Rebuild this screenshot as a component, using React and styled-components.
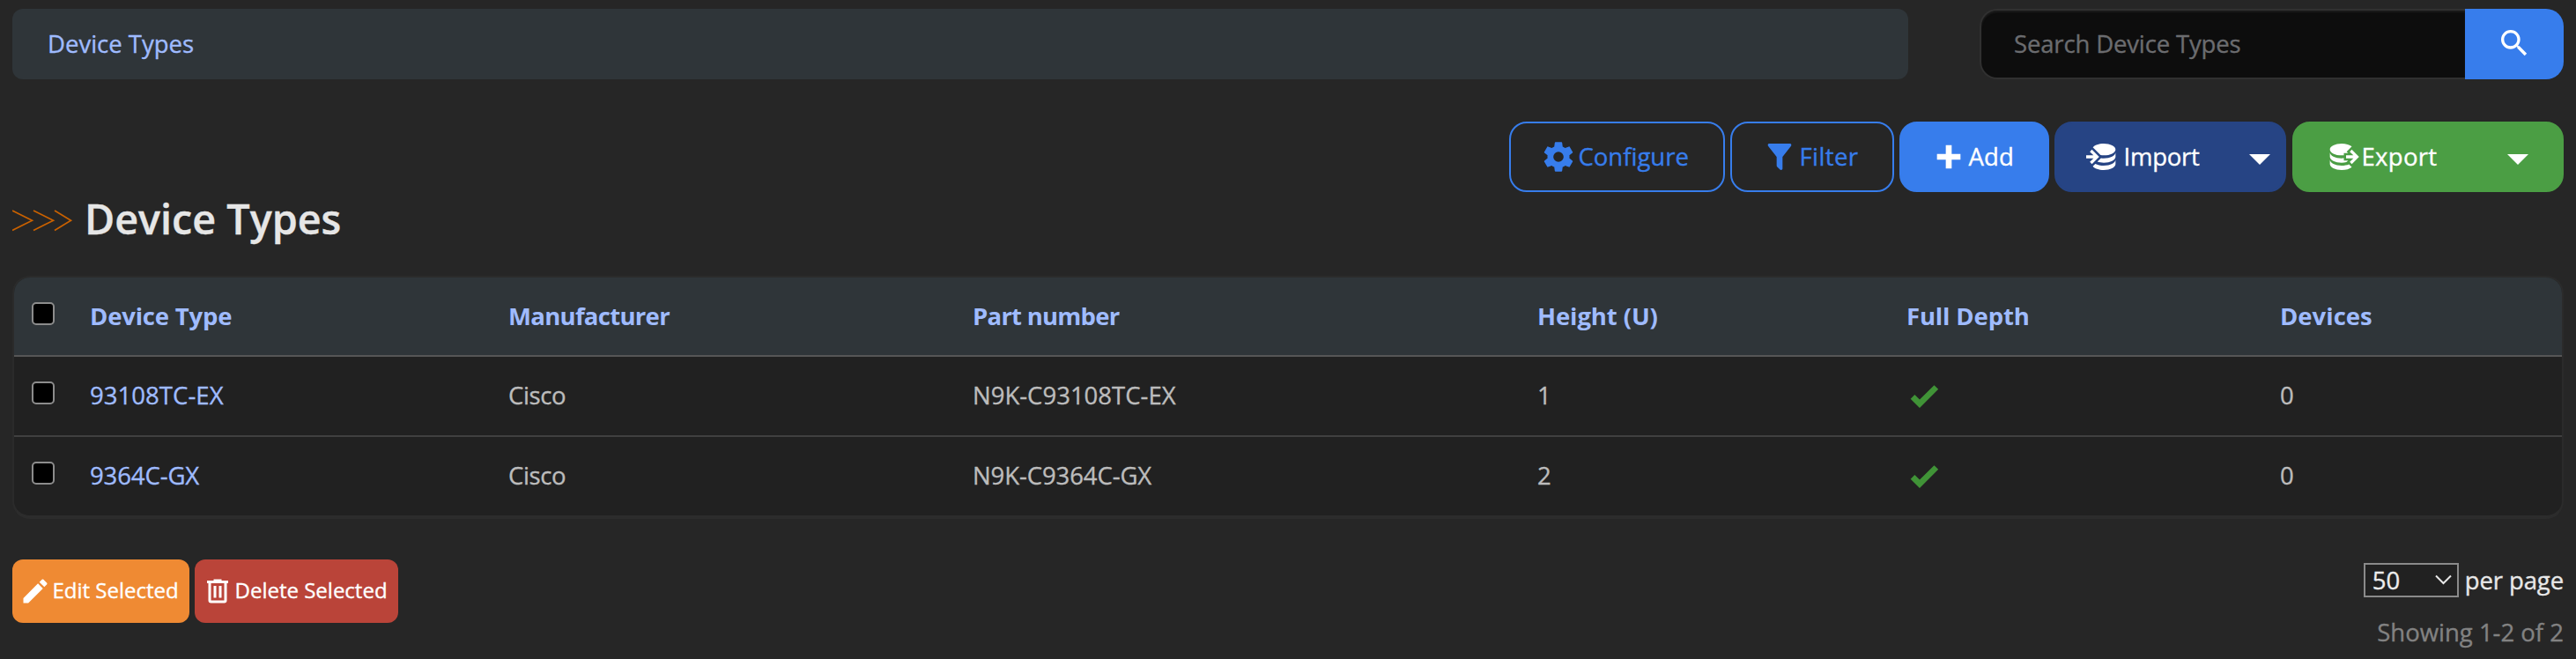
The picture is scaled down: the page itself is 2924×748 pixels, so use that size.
import React from 'react';
import styled, { createGlobalStyle } from 'styled-components';

const ICONS = {
  cog: 'M12,15.5A3.5,3.5 0 0,1 8.5,12A3.5,3.5 0 0,1 12,8.5A3.5,3.5 0 0,1 15.5,12A3.5,3.5 0 0,1 12,15.5M19.43,12.97C19.47,12.65 19.5,12.33 19.5,12C19.5,11.67 19.47,11.34 19.43,11L21.54,9.37C21.73,9.22 21.78,8.95 21.66,8.73L19.66,5.27C19.54,5.05 19.27,4.96 19.05,5.05L16.56,6.05C16.04,5.66 15.5,5.32 14.87,5.07L14.5,2.42C14.46,2.18 14.25,2 14,2H10C9.75,2 9.54,2.18 9.5,2.42L9.13,5.07C8.5,5.32 7.96,5.66 7.44,6.05L4.95,5.05C4.73,4.96 4.46,5.05 4.34,5.27L2.34,8.73C2.21,8.95 2.27,9.22 2.46,9.37L4.57,11C4.53,11.34 4.5,11.67 4.5,12C4.5,12.33 4.53,12.65 4.57,12.97L2.46,14.63C2.27,14.78 2.21,15.05 2.34,15.27L4.34,18.73C4.46,18.95 4.73,19.03 4.95,18.95L7.44,17.94C7.96,18.34 8.5,18.68 9.13,18.93L9.5,21.58C9.54,21.82 9.75,22 10,22H14C14.25,22 14.46,21.82 14.5,21.58L14.87,18.93C15.5,18.67 16.04,18.34 16.56,17.94L19.05,18.95C19.27,19.03 19.54,18.95 19.66,18.73L21.66,15.27C21.78,15.05 21.73,14.78 21.54,14.63L19.43,12.97Z',
  filter: 'M14,12V19.88C14.04,20.18 13.94,20.5 13.71,20.71C13.32,21.1 12.69,21.1 12.3,20.71L10.29,18.7C10.06,18.47 9.96,18.16 10,17.87V12H9.97L4.21,4.62C3.87,4.19 3.95,3.56 4.38,3.22C4.57,3.08 4.78,3 5,3V3H19V3C19.22,3 19.43,3.08 19.62,3.22C20.05,3.56 20.13,4.19 19.79,4.62L14.03,12H14Z',
  plus: 'M20 14H14V20H10V14H4V10H10V4H14V10H20V14Z',
  dbImport: 'M12,3C8.59,3 5.69,4.07 4.54,5.57L9.79,10.82C10.5,10.93 11.22,11 12,11C16.42,11 20,9.21 20,7C20,4.79 16.42,3 12,3M3.92,7.08L2.5,8.5L5,11H0V13H5L2.5,15.5L3.92,16.92L8.84,12M20,9C20,11.21 16.42,13 12,13C11.34,13 10.7,12.95 10.09,12.87L7.62,15.34C8.88,15.75 10.38,16 12,16C16.42,16 20,14.21 20,12M20,14C20,16.21 16.42,18 12,18C9.72,18 7.67,17.5 6.21,16.75L4.53,18.43C5.68,19.93 8.59,21 12,21C16.42,21 20,19.21 20,17',
  dbExport: 'M12,3C7.58,3 4,4.79 4,7C4,9.21 7.58,11 12,11C12.5,11 13,10.97 13.5,10.92V9.5H16.39L15.39,8.5L18.9,5C17.5,3.8 14.94,3 12,3M18.92,7.08L17.5,8.5L20,11H15V13H20L17.5,15.5L18.92,16.92L23.84,12M4,9V12C4,14.21 7.58,16 12,16C13.17,16 14.26,15.85 15.25,15.63L16.38,14.5H13.5V12.92C13,12.97 12.5,13 12,13C7.58,13 4,11.21 4,9M4,14V17C4,19.21 7.58,21 12,21C14.94,21 17.5,20.2 18.9,19L17,17.1C15.61,17.66 13.9,18 12,18C7.58,18 4,16.21 4,14Z',
  magnify: 'M9.5,3A6.5,6.5 0 0,1 16,9.5C16,11.11 15.41,12.59 14.44,13.73L14.71,14H15.5L20.5,19L19,20.5L14,15.5V14.71L13.73,14.44C12.59,15.41 11.11,16 9.5,16A6.5,6.5 0 0,1 3,9.5A6.5,6.5 0 0,1 9.5,3M9.5,5C7,5 5,7 5,9.5C5,12 7,14 9.5,14C12,14 14,12 14,9.5C14,7 12,5 9.5,5Z',
  check: 'M9,20.42L2.79,14.21L5.62,11.38L9,14.77L18.88,4.88L21.71,7.71L9,20.42Z',
  pencil: 'M20.71,7.04C21.1,6.65 21.1,6 20.71,5.63L18.37,3.29C18,2.9 17.35,2.9 16.96,3.29L15.12,5.12L18.87,8.87M3,17.25V21H6.75L17.81,9.93L14.06,6.18L3,17.25Z',
  trash: 'M9,3V4H4V6H5V19A2,2 0 0,0 7,21H17A2,2 0 0,0 19,19V6H20V4H15V3H9M7,6H17V19H7V6M9,8V17H11V8H9M13,8V17H15V8H13Z',
};

const GlobalStyle = createGlobalStyle`
  *, *::before, *::after { box-sizing: border-box; }
  body {
    margin: 0;
    background: #262626;
    color: #bcbcbc;
    font-family: 'Open Sans', 'Noto Sans', sans-serif;
    font-size: 27.5px;
    line-height: 40px;
    -webkit-text-stroke: 0.35px currentColor;
  }
  input, select, button { font: inherit; margin: 0; }
`;

const Page = styled.main`
  height: 748px;
  padding: 10px 14px 0;
  overflow: hidden;
`;

const TopBar = styled.header`
  display: flex;
  justify-content: space-between;
`;

const Breadcrumb = styled.nav`
  display: flex;
  align-items: center;
  width: 2152px;
  height: 80px;
  padding: 0 40px 1px;
  border-radius: 12px;
  background: #2f3539;
`;

const Link = styled.a`
  color: #9fbbff;
  text-decoration: none;
  -webkit-text-stroke-color: #9fbbff;
`;

const Text = styled.span`
  letter-spacing: ${(p) => p.$track || 0}px;
  white-space: nowrap;
`;

const SearchForm = styled.form`
  display: flex;
  width: 663px;
  height: 80px;
`;

const SearchInput = styled.input`
  flex: 1;
  min-width: 0;
  padding: 0 36px 1px 37px;
  border: 2px solid #303030;
  border-right: 0;
  border-radius: 20px 0 0 20px;
  outline: 0;
  background: #0d0d0d;
  box-shadow: inset 0 2px 2px #1c1c1c;
  color: #e6e6e6;
  letter-spacing: -0.15px;
  &::placeholder {
    color: #6b6c6f;
    opacity: 1;
    -webkit-text-stroke: 0.35px #6b6c6f;
  }
`;

const SearchButton = styled.button`
  display: flex;
  align-items: center;
  justify-content: center;
  width: 112px;
  padding: 0 0 2px;
  border: 0;
  border-radius: 0 20px 20px 0;
  background: #377dec;
  color: #fff;
`;

const Glyph = styled.svg`
  flex: none;
  display: block;
  width: ${(p) => p.$size}px;
  height: ${(p) => p.$size}px;
  fill: currentColor;
`;

const Actions = styled.div`
  display: flex;
  justify-content: flex-end;
  gap: 6px;
  margin-top: 48px;
`;

const ActionButton = styled.button`
  display: flex;
  align-items: center;
  gap: 2.5px;
  width: ${(p) => p.$width}px;
  height: 80px;
  padding: 0 34px 0;
  border: 2px solid ${(p) => p.$fill || '#377dec'};
  border-radius: 20px;
  background: ${(p) => p.$fill || 'transparent'};
  color: ${(p) => (p.$fill ? '#fff' : '#377dec')};
  -webkit-text-stroke: 0.35px ${(p) => (p.$fill ? '#fff' : '#377dec')};
`;

const MenuButton = styled(ActionButton)`
  padding-right: ${(p) => p.$end}px;
  & + & { margin-left: 1px; }
`;

const Caret = styled.span`
  margin: 6px 0 0 auto;
  border: 12px solid transparent;
  border-top-color: #fff;
  border-bottom: 0;
`;

const TitleRow = styled.div`
  display: flex;
  align-items: center;
  gap: 13px;
  height: 64px;
  margin: 0 0 31px;
`;

const Prompt = styled.svg`
  width: 69px;
  height: 28px;
  fill: none;
  stroke: #c96100;
  stroke-width: 1.7;
`;

const Title = styled.h1`
  margin: -4px 0 0;
  color: #e6e6e6;
  font-size: 46.7px;
  font-weight: 600;
  line-height: 64px;
  -webkit-text-stroke: 0.4px #e6e6e6;
`;

const TablePanel = styled.section`
  border: 2px solid #2b2b2b;
  border-bottom: 4px solid #2c2c2c;
  border-radius: 20px;
  background: #212121;
  overflow: hidden;
`;

const Row = styled.div`
  display: grid;
  grid-template-columns: 86px 475px 527px 641px 419px 424px 1fr;
  align-items: center;
  height: ${(p) => (p.$last ? 89 : 91)}px;
  padding-bottom: 2px;
  border-bottom: ${(p) => (p.$last ? 0 : 2)}px solid #404040;
`;

const HeadRow = styled(Row)`
  height: 90px;
  padding-bottom: 0;
  border-bottom-color: #565656;
  background: #2f3539;
  font-weight: 700;
  -webkit-text-stroke-width: 0;
`;

const Checkbox = styled.input`
  appearance: none;
  display: block;
  width: 26px;
  height: 26px;
  margin: 0 0 ${(p) => (p.$head ? 7 : 5)}px 20px;
  border: 2px solid #8c8c8c;
  border-radius: 5px;
  background: #000;
`;

const Yes = styled.span`
  color: #409337;
`;

const Footer = styled.footer`
  display: flex;
  justify-content: space-between;
  align-items: flex-start;
  margin-top: 46px;
`;

const BulkActions = styled.div`
  display: flex;
  gap: 6px;
`;

const BulkButton = styled.button`
  display: flex;
  align-items: center;
  gap: 1.5px;
  width: ${(p) => p.$width}px;
  height: 72px;
  padding: 0 0 0 8px;
  border: 0;
  border-radius: 12px;
  background: ${(p) => p.$fill};
  color: #fff;
  font-size: 24px;
  font-weight: 500;
  -webkit-text-stroke: 0.35px #fff;
`;

const BulkLabel = styled(Text)`
  padding-bottom: 2px;
`;

const Paging = styled.div`
  display: flex;
  flex-direction: column;
  align-items: flex-end;
  gap: 20px;
  padding-top: 4px;
`;

const PerPage = styled.label`
  display: flex;
  align-items: center;
  gap: 7px;
  height: 39px;
  color: #e8e8e8;
  -webkit-text-stroke-color: #e8e8e8;
`;

const SelectBox = styled.span`
  position: relative;
  display: block;
  width: 108px;
  height: 39px;
`;

const Select = styled.select`
  appearance: none;
  display: block;
  width: 108px;
  height: 39px;
  padding: 0 8px;
  border: 2px solid #8a8a8a;
  border-radius: 0;
  background: #212121;
  color: #eee;
  line-height: 34px;
`;

const Chevron = styled.svg`
  position: absolute;
  right: 8px;
  top: 13px;
  width: 19px;
  height: 12px;
  fill: none;
  stroke: #e8e8e8;
  stroke-width: 2;
  pointer-events: none;
`;

const Showing = styled.div`
  color: #828282;
  -webkit-text-stroke-color: #828282;
`;

function Icon({ name, size = 40 }) {
  return (
    <Glyph $size={size} viewBox="0 0 24 24" aria-hidden="true">
      <path d={ICONS[name]} />
    </Glyph>
  );
}

const HEADINGS = [
  ['Device Type', -0.2],
  ['Manufacturer', -0.7],
  ['Part number', -0.75],
  ['Height (U)', -0.1],
  ['Full Depth', -0.15],
  ['Devices', 0],
];

const DEVICE_TYPES = [
  { name: '93108TC-EX', part: 'N9K-C93108TC-EX', height: 1, devices: 0, track: 0.05, partTrack: 0 },
  { name: '9364C-GX', part: 'N9K-C9364C-GX', height: 2, devices: 0, track: -0.1, partTrack: -0.1 },
];

export default function App() {
  return (
    <Page>
      <GlobalStyle />
      <TopBar>
        <Breadcrumb>
          <Link>Device Types</Link>
        </Breadcrumb>
        <SearchForm>
          <SearchInput placeholder="Search Device Types" />
          <SearchButton type="button" aria-label="Search">
            <Icon name="magnify" />
          </SearchButton>
        </SearchForm>
      </TopBar>

      <Actions>
        <ActionButton $width={245}>
          <Icon name="cog" />
          <Text>Configure</Text>
        </ActionButton>
        <ActionButton $width={186}>
          <Icon name="filter" />
          <Text $track={0.4}>Filter</Text>
        </ActionButton>
        <ActionButton $width={170} $fill="#377dec">
          <Icon name="plus" />
          <Text $track={0.2}>Add</Text>
        </ActionButton>
        <MenuButton $width={263} $fill="#264484" $end={16}>
          <Icon name="dbImport" />
          <Text $track={-0.25}>Import</Text>
          <Caret />
        </MenuButton>
        <MenuButton $width={308} $fill="#4b9e44" $end={38}>
          <Icon name="dbExport" />
          <Text $track={0.3}>Export</Text>
          <Caret />
        </MenuButton>
      </Actions>

      <TitleRow>
        <Prompt viewBox="0 0 69 28" aria-hidden="true">
          <path d="M0 3L22.5 14.2L0 25.4M24 3L46.5 14.2L24 25.4M48 3L66.5 14.2L48 25.4" />
        </Prompt>
        <Title>Device Types</Title>
      </TitleRow>

      <TablePanel>
        <HeadRow>
          <Checkbox type="checkbox" $head />
          {HEADINGS.map(([label, track]) => (
            <Link key={label}>
              <Text $track={track}>{label}</Text>
            </Link>
          ))}
        </HeadRow>
        {DEVICE_TYPES.map((d, i) => (
          <Row key={d.name} $last={i === DEVICE_TYPES.length - 1}>
            <Checkbox type="checkbox" />
            <Link>
              <Text $track={d.track}>{d.name}</Text>
            </Link>
            <Text $track={-0.4}>Cisco</Text>
            <Text $track={d.partTrack}>{d.part}</Text>
            <Text>{d.height}</Text>
            <Yes>
              <Icon name="check" />
            </Yes>
            <Text>{d.devices}</Text>
          </Row>
        ))}
      </TablePanel>

      <Footer>
        <BulkActions>
          <BulkButton $width={201} $fill="#ef8a33">
            <Icon name="pencil" size={36} />
            <BulkLabel>Edit Selected</BulkLabel>
          </BulkButton>
          <BulkButton $width={231} $fill="#ba4439">
            <Icon name="trash" size={36} />
            <BulkLabel>Delete Selected</BulkLabel>
          </BulkButton>
        </BulkActions>
        <Paging>
          <PerPage>
            <SelectBox>
              <Select defaultValue="50">
                <option>50</option>
              </Select>
              <Chevron viewBox="0 0 19 12">
                <path d="M1 1.5L9.5 10L18 1.5" />
              </Chevron>
            </SelectBox>
            <Text $track={-0.1}>per page</Text>
          </PerPage>
          <Showing>
            <Text>Showing 1-2 of 2</Text>
          </Showing>
        </Paging>
      </Footer>
    </Page>
  );
}
